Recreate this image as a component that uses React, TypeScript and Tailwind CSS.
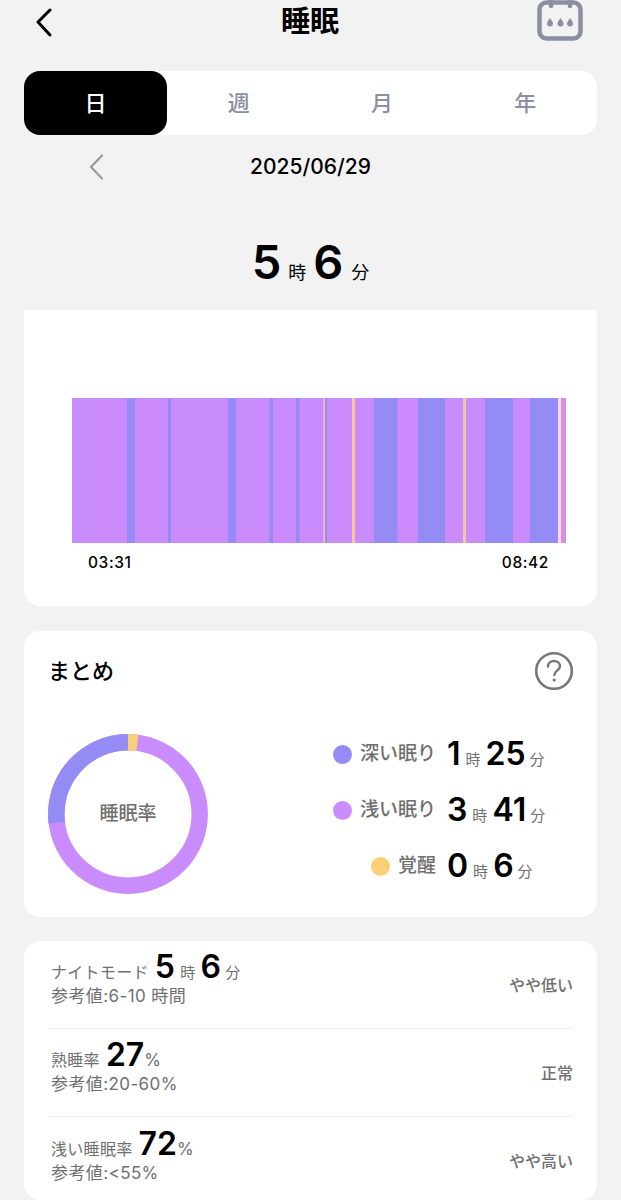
const font = { fontFamily: '"Inter", "Noto Sans CJK JP", sans-serif' }

const DEEP = '#958bf5'
const LIGHT = '#ca8cfd'
const AWAKE = '#fbcf75'
const AWAKE_BLUR = '#f8c89a'

// chart segments in px from the left edge of the bar
const stripes: [number, number, string][] = [
  [55, 8, DEEP],
  [96, 3, DEEP],
  [156, 8, DEEP],
  [197.5, 3.5, DEEP],
  [224, 3.5, DEEP],
  [251.5, 1.5, AWAKE_BLUR],
  [253, 2, DEEP],
  [280, 3, AWAKE_BLUR],
  [302, 23.5, DEEP],
  [346, 27, DEEP],
  [391, 3, AWAKE_BLUR],
  [413, 28, DEEP],
  [458, 28, DEEP],
  [486, 3, '#f6d9ef'],
  [489.5, 3.5, '#dd8fd0'],
]

function Duration({ h, m }: { h: string; m: string }) {
  return (
    <div className="flex items-baseline whitespace-nowrap text-black">
      <span className="text-[32px] font-semibold leading-none">{h}</span>
      <span className="mx-[5px] text-[15px] leading-none text-[#6f6f6f]">時</span>
      <span className="text-[32px] font-semibold leading-none">{m}</span>
      <span className="ml-[4px] text-[15px] leading-none text-[#6f6f6f]">分</span>
    </div>
  )
}

function LegendRow({ color, label, h, m }: { color: string; label: string; h: string; m: string }) {
  return (
    <div className="grid h-[56px] grid-cols-[113px_1fr] items-center gap-x-[11px]">
      <div className="flex items-center justify-end gap-[8px] text-[19px] font-medium text-[#6f6f6f]">
        <span className="h-[19px] w-[19px] shrink-0 rounded-full" style={{ backgroundColor: color }} />
        <span className="whitespace-nowrap">{label}</span>
      </div>
      <Duration h={h} m={m} />
    </div>
  )
}

function DetailRow({
  label,
  value,
  unit,
  minutes,
  range,
  status,
  border,
}: {
  label: string
  value: string
  unit?: string
  minutes?: string
  range: string
  status: string
  border?: boolean
}) {
  return (
    <div className={`flex h-[88px] items-center justify-between ${border ? 'border-b border-[#efefef]' : ''}`}>
      <div className="flex flex-col pb-[10px] pl-[3px]">
        <div className="flex h-[30px] items-baseline gap-[6px] text-[16px] tracking-[0.3px] text-[#6f6f6f]">
          <span className="whitespace-nowrap">{label}</span>
          {minutes ? (
            <Duration h={value} m={minutes} />
          ) : (
            <div className="flex items-baseline">
              <span className="text-[32px] font-semibold leading-none tracking-normal text-black">{value}</span>
              <span className="text-[17px] leading-none">{unit}</span>
            </div>
          )}
        </div>
        <div className="mt-[3px] text-[17px] leading-[24px] tracking-[0.4px] text-[#6f6f6f]">{range}</div>
      </div>
      <div className="text-[16px] font-medium text-[#6f6f6f]">{status}</div>
    </div>
  )
}

export default function App() {
  return (
    <div className="h-[1200px] w-[621px] overflow-hidden bg-[#f2f2f2] px-[24px]" style={font}>
      {/* ヘッダー */}
      <div className="flex h-[43px] items-center justify-between">
        <svg width="20" height="30" viewBox="0 0 20 30" className="ml-[9px]" fill="none">
          <path d="M17 3 L5 15 L17 28" stroke="#000" strokeWidth="3" strokeLinecap="round" strokeLinejoin="round" />
        </svg>
        <div className="ml-[30px] text-[29px] font-bold leading-none text-black">睡眠</div>
        <svg width="46" height="46" viewBox="0 0 46 46" className="-mt-[5px] mr-[14px]" fill="none">
          <rect x="2.5" y="6.5" width="41" height="36" rx="7" stroke="#8a8fa3" strokeWidth="4.5" />
          <path d="M14 0 V10 M33 0 V10" stroke="#8a8fa3" strokeWidth="4.5" strokeLinecap="round" />
          <path d="M13 22 C15 25 16 26 16 27.5 A3 3 0 0 1 10 27.5 C10 26 11 25 13 22 Z" fill="#8a8fa3" />
          <path d="M23.5 22 C25.5 25 26.5 26 26.5 27.5 A3 3 0 0 1 20.5 27.5 C20.5 26 21.5 25 23.5 22 Z" fill="#8a8fa3" />
          <path d="M33 22 C35 25 36 26 36 27.5 A3 3 0 0 1 30 27.5 C30 26 31 25 33 22 Z" fill="#8a8fa3" />
        </svg>
      </div>

      {/* タブ */}
      <div className="mt-[28px] grid h-[64px] grid-cols-4 rounded-[16px] bg-white text-[22px] font-medium text-[#8a8fa3]">
        <div className="flex items-center justify-center rounded-[16px] bg-black text-white">日</div>
        <div className="flex items-center justify-center">週</div>
        <div className="flex items-center justify-center">月</div>
        <div className="flex items-center justify-center">年</div>
      </div>

      {/* 日付 */}
      <div className="relative flex h-[64px] items-center justify-center text-[21px] font-medium text-black">
        <svg width="16" height="26" viewBox="0 0 16 26" className="absolute left-[64px] top-[19px]" fill="none">
          <path d="M14 1.5 L3 13 L14 24.5" stroke="#9a9a9a" strokeWidth="2.2" strokeLinecap="round" strokeLinejoin="round" />
        </svg>
        <span>2025/06/29</span>
      </div>

      {/* 合計 */}
      <div className="mt-[33px] flex h-[78px] items-start justify-center text-black">
        <div className="flex items-baseline">
          <span className="text-[47px] font-semibold leading-[60px]">5</span>
          <span className="mx-[7px] text-[18px] leading-none">時</span>
          <span className="text-[47px] font-semibold leading-[60px]">6</span>
          <span className="ml-[8px] text-[18px] leading-none">分</span>
        </div>
      </div>

      {/* チャート */}
      <div className="h-[296px] rounded-b-[16px] bg-white pl-[48px] pt-[88px]">
        <svg width="494" height="145" viewBox="0 0 494 145" className="block">
          <rect x="0" y="0" width="494" height="145" fill={LIGHT} />
          {stripes.map(([x, w, c]) => (
            <rect key={x} x={x} y="0" width={w} height="145" fill={c} />
          ))}
        </svg>
        <div className="mt-[10px] flex w-[477px] justify-between pl-[16px] text-[15.5px] font-medium leading-[20px] tracking-[0.6px] text-black">
          <span>03:31</span>
          <span>08:42</span>
        </div>
      </div>

      {/* まとめ */}
      <div className="mt-[25px] h-[286px] rounded-[16px] bg-white px-[24px]">
        <div className="flex h-[80px] items-center justify-between">
          <span className="text-[22px] font-medium leading-none text-black">まとめ</span>
          <svg width="40" height="40" viewBox="0 0 40 40" className="-mr-[1px]" fill="none">
            <circle cx="20" cy="20" r="17.8" stroke="#767676" strokeWidth="2.6" />
            <path
              d="M14 15.5 C14 12 16.8 10 20 10 C23.2 10 26 12 26 15.3 C26 19.5 20.3 19.8 20.3 24"
              stroke="#767676"
              strokeWidth="2.4"
              strokeLinecap="round"
            />
            <circle cx="20.2" cy="29" r="1.6" fill="#767676" />
          </svg>
        </div>
        <div className="mt-[23px] flex items-start">
          <div className="relative h-[160px] w-[160px] shrink-0">
            <svg width="160" height="160" viewBox="0 0 160 160" className="block" fill="none">
              <circle cx="80" cy="80" r="71.7" stroke={LIGHT} strokeWidth="16.5" />
              <path d="M8.8 88.7 A71.7 71.7 0 0 1 80 8.3" stroke={DEEP} strokeWidth="16.5" />
              <path d="M80 8.3 A71.7 71.7 0 0 1 89.4 8.9" stroke={AWAKE} strokeWidth="16.5" />
            </svg>
            <div className="absolute inset-0 flex items-center justify-center text-[19px] font-medium text-[#6f6f6f]">睡眠率</div>
          </div>
          <div className="-mt-[8px] ml-[115px] flex flex-col">
            <LegendRow color={DEEP} label="深い眠り" h="1" m="25" />
            <LegendRow color={LIGHT} label="浅い眠り" h="3" m="41" />
            <LegendRow color={AWAKE} label="覚醒" h="0" m="6" />
          </div>
        </div>
      </div>

      {/* 詳細 */}
      <div className="mt-[24px] h-[259px] rounded-[16px] bg-white px-[24px]">
        <DetailRow label="ナイトモード" value="5" minutes="6" range="参考値:6-10 時間" status="やや低い" border />
        <DetailRow label="熟睡率" value="27" unit="%" range="参考値:20-60%" status="正常" border />
        <DetailRow label="浅い睡眠率" value="72" unit="%" range="参考値:<55%" status="やや高い" />
      </div>
    </div>
  )
}
